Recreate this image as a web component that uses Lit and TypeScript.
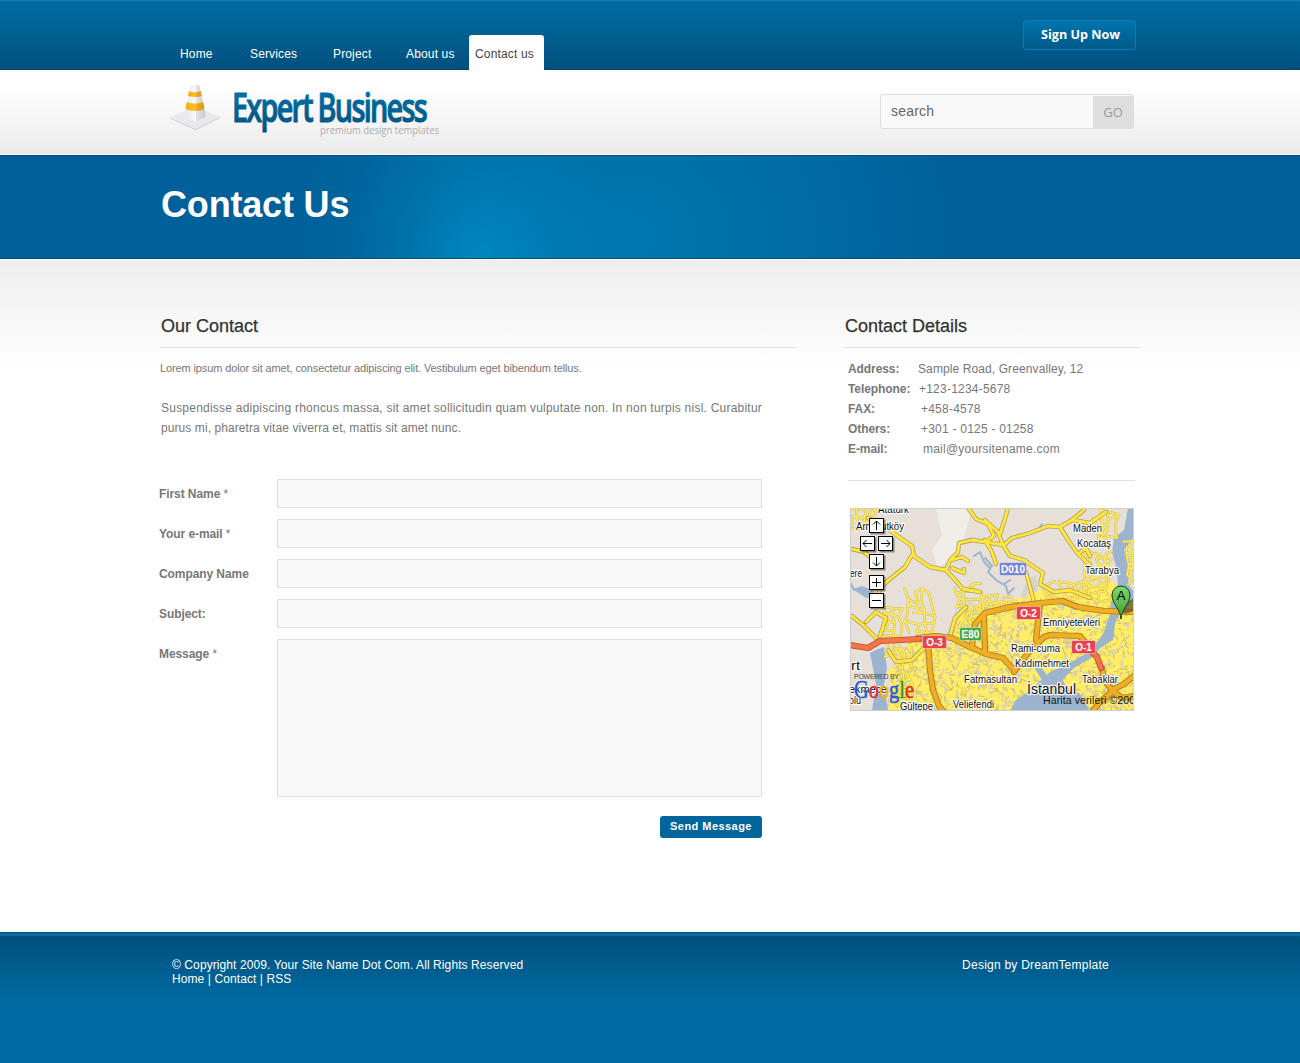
import { LitElement, html, svg, css } from "lit";
import { customElement } from "lit/decorators.js";

const NAV = [
  { label: "Home", width: 70 },
  { label: "Services", width: 83 },
  { label: "Project", width: 73 },
  { label: "About us", width: 63 },
];

const DETAILS = [
  { label: "Address:", value: "Sample Road, Greenvalley, 12", offset: 70 },
  { label: "Telephone:", value: "+123-1234-5678", offset: 71 },
  { label: "FAX:", value: "+458-4578", offset: 73 },
  { label: "Others:", value: "+301 - 0125 - 01258", offset: 73 },
  { label: "E-mail:", value: "mail@yoursitename.com", offset: 75 },
];

const FIELDS = [
  { label: "First Name", required: true },
  { label: "Your e-mail", required: true },
  { label: "Company Name", required: false },
  { label: "Subject:", required: false },
];

/* Small deterministic generator, so that the street texture is stable. */
function random(seed: number) {
  let s = seed;
  return () => {
    s = (s * 16807) % 2147483647;
    return s / 2147483647;
  };
}

/* A crooked street grid inside a rectangle. */
function streets(x: number, y: number, w: number, h: number, step: number, seed: number) {
  const r = random(seed);
  const cols = Math.round(w / step);
  const rows = Math.round(h / step);
  const pts: number[][][] = [];
  for (let j = 0; j <= rows; j++) {
    pts.push([]);
    for (let i = 0; i <= cols; i++) {
      pts[j].push([
        x + i * step + (r() - 0.5) * step * 0.9,
        y + j * step + (r() - 0.5) * step * 0.9,
      ]);
    }
  }
  let d = "";
  for (let j = 0; j <= rows; j++) {
    for (let i = 0; i <= cols; i++) {
      const [a, b] = pts[j][i];
      if (i < cols && r() > 0.25) {
        d += `M${a.toFixed(1)} ${b.toFixed(1)}L${pts[j][i + 1][0].toFixed(1)} ${pts[j][i + 1][1].toFixed(1)}`;
      }
      if (j < rows && r() > 0.2) {
        d += `M${a.toFixed(1)} ${b.toFixed(1)}L${pts[j + 1][i][0].toFixed(1)} ${pts[j + 1][i][1].toFixed(1)}`;
      }
    }
  }
  return d;
}

/* Short block outlines scattered over the dense urban area. */
function blocks(count: number, seed: number) {
  const r = random(seed);
  let d = "";
  for (let i = 0; i < count; i++) {
    const x = 880 + r() * 254;
    const y = 596 + r() * 114;
    const a = r() * Math.PI;
    const l = 1.5 + r() * 3;
    d += `M${x.toFixed(1)} ${y.toFixed(1)}l${(Math.cos(a) * l).toFixed(1)} ${(Math.sin(a) * l).toFixed(1)}`;
  }
  return d;
}

const STREETS = [
  streets(852, 511, 24, 18, 6, 11),
  streets(908, 592, 22, 46, 8, 23),
  streets(958, 586, 24, 44, 7, 37),
  streets(1086, 552, 26, 50, 6, 41),
  streets(1096, 511, 22, 26, 7, 53),
  streets(1126, 540, 8, 44, 6, 67),
  streets(886, 608, 12, 46, 7, 71),
  streets(1046, 584, 40, 16, 7, 83),
  streets(985, 596, 28, 18, 6, 97),
  streets(898, 650, 12, 56, 6, 101),
].join("");

const MAIN_STREETS = [
  "M868 518L880 523L902 539L912 546L914 556L930 567L946 570L956 581L963 589L980 592",
  "M912 555L905 567L890 579L880 588L876 606",
  "M946 570L950 560L958 552L959 543L972 540L985 542L994 536L988 524L976 519L968 508",
  "M952 560L962 557L968 561M952 568L964 573L964 569",
  "M985 542L1004 545L1012 538L1030 533L1048 526L1060 527L1068 540L1078 554L1090 565",
  "M985 520L998 532L1003 545L1010 556L1024 560L1043 573L1040 584L1054 592L1070 590L1090 598",
  "M1000 534L1004 522L1008 508M985 540L992 552L996 564M1026 572L1034 602",
  "M1060 527L1072 520L1084 510M1072 520L1090 523L1106 512M1078 554L1086 548L1090 556",
  "M852 616L864 626L876 638M866 622L876 612L886 618L880 636M888 650L896 662L912 660L926 646",
  "M966 607L955 618L950 636M852 549L864 552L874 560",
].join("");

const HIGHWAYS = [
  "M918 638L936 636L952 638L968 646L986 654L1003 658L1014 670",
  "M928 644L930 670L933 690L939 706L944 712",
  "M972 646L975 624L985 613L1010 607L1040 603L1062 601L1078 607L1104 611L1134 612",
  "M985 652L984 618M1040 604L1036 640",
  "M1014 672L1028 653L1044 637L1050 635L1080 636L1088 646",
  "M1102 668L1104 680L1112 690L1122 698L1134 696M1112 690L1124 684L1134 676M1112 692L1100 702L1092 712",
].join("");

const RED_ROADS = "M850 645L868 648L880 641L920 639M1090 650L1097 657L1101 668";

const MAP_LABELS = [
  { x: 878, y: 513, w: 31, t: "Atatürk", s: 10 },
  { x: 856, y: 530, w: 48, t: "Arnavutköy", s: 10 },
  { x: 850, y: 577, w: 12, t: "ere", s: 10 },
  { x: 1073, y: 532, w: 29, t: "Maden", s: 10 },
  { x: 1077, y: 547, w: 34, t: "Kocataş", s: 10 },
  { x: 1085, y: 574, w: 34, t: "Tarabya", s: 10 },
  { x: 1043, y: 626, w: 57, t: "Emniyetevleri", s: 10 },
  { x: 1011, y: 652, w: 49, t: "Rami-cuma", s: 10 },
  { x: 1015, y: 667, w: 54, t: "Kadımehmet", s: 10 },
  { x: 964, y: 683, w: 53, t: "Fatmasultan", s: 10 },
  { x: 1082, y: 683, w: 36, t: "Tabaklar", s: 10 },
  { x: 900, y: 710, w: 33, t: "Gültepe", s: 10 },
  { x: 953, y: 708, w: 41, t: "Veliefendi", s: 10 },
  { x: 1027, y: 694, w: 49, t: "İstanbul", s: 14 },
  { x: 851, y: 670, w: 9, t: "rt", s: 12 },
  { x: 849, y: 693, w: 38, t: "ekmece", s: 10 },
  { x: 849, y: 704, w: 12, t: "olu", s: 10 },
];

const SHIELDS = [
  { x: 999, y: 562, w: 28, t: "D010", c: "#7784d0" },
  { x: 1016, y: 606, w: 25, t: "O-2", c: "#e64550" },
  { x: 922, y: 635, w: 25, t: "O-3", c: "#e64550" },
  { x: 1071, y: 640, w: 25, t: "O-1", c: "#e64550" },
  { x: 959, y: 627, w: 23, t: "E80", c: "#52a84c" },
];

const CONTROLS = [
  { x: 869, y: 518, d: "M7.5 12V3M4 6.5L7.5 3L11 6.5" },
  { x: 860, y: 536, d: "M12 7.5H3M6.5 4L3 7.5L6.5 11" },
  { x: 878, y: 536, d: "M3 7.5H12M8.5 4L12 7.5L8.5 11" },
  { x: 869, y: 554, d: "M7.5 3V12M4 8.5L7.5 12L11 8.5" },
  { x: 869, y: 575, d: "M3 7.5H12M7.5 3V12" },
  { x: 869, y: 593, d: "M3 7.5H12" },
];

const GOOGLE = [
  ["G", "#2a5bd0"],
  ["o", "#d8302a"],
  ["o", "#f0b400"],
  ["g", "#2a5bd0"],
  ["l", "#2f9a3c"],
  ["e", "#d8302a"],
];

@customElement("city-map")
export class CityMap extends LitElement {
  static styles = css`
    :host {
      display: block;
      width: 284px;
      height: 203px;
    }
    svg {
      display: block;
    }
    text {
      font-family: "Liberation Sans", Arial, sans-serif;
    }
    .place {
      fill: #111;
      stroke: #fff;
      stroke-opacity: 0.85;
      stroke-width: 2.4px;
      stroke-linejoin: round;
      paint-order: stroke;
    }
    .shield {
      fill: #fff;
      font-weight: 700;
      font-size: 10px;
      text-anchor: middle;
    }
    .google {
      font-family: "Liberation Serif", "Times New Roman", serif;
      font-size: 25px;
      stroke-width: 0.5px;
    }
    .line {
      fill: none;
      stroke-linejoin: round;
      stroke-linecap: round;
    }
  `;

  render() {
    return html`
      <svg width="284" height="203" viewBox="850 508 284 203">
        <defs>
          <clipPath id="urban">
            <path
              d="M900 656L910 640L926 636L950 645L956 622L968 606L990 604L1020 598L1040 590L1080 590L1112 582L1134 592V712H884L892 690L888 672Z"
            />
          </clipPath>
          <linearGradient id="pin" x1="0" y1="0" x2="0" y2="1">
            <stop offset="0" stop-color="#7fd868" />
            <stop offset="1" stop-color="#3c9d34" />
          </linearGradient>
        </defs>
        <rect x="850" y="508" width="284" height="203" fill="#e7e0d8" />
        <path d="M936 508L972 508L960 552L938 568L932 550L942 536Z" fill="#f1eeea" />
        <path d="M1028 578L1036 576L1038 602L1018 604Z" fill="#d5d1cb" />
        <path d="M962 592L980 610L962 640L946 636Z" fill="#d9d6d0" />
        <g clip-path="url(#urban)">
          <rect x="850" y="580" width="284" height="131" fill="#ffed66" />
          <path class="line" d=${blocks(1500, 5)} stroke="#d2c47c" stroke-width="1.3" />
          <path class="line" d=${blocks(380, 19)} stroke="#d9cfbe" stroke-width="2.2" />
          <path class="line" d=${blocks(500, 29)} stroke="#ffee5c" stroke-width="1.6" />
        </g>
        <g fill="#9db4cf">
          <path
            d="M1128 508H1134V537L1124 550L1130 562L1128 584L1134 592V600L1120 612L1115 624L1113 640L1100 648L1094 656L1074 668L1062 680L1068 688L1080 694L1090 711H1010L1016 700L1028 692L1050 672L1068 664L1092 650L1104 632L1110 614L1112 596L1118 584L1116 566L1112 552L1114 538L1124 530Z"
          />
          <path d="M870 653L876 650L884 647L887 668L884 684L888 711H872L876 684Z" />
          <path d="M853 589L862 586L872 590L878 596L866 598Z" />
          <path d="M1032 664L1038 664L1048 676L1042 680Z" />
        </g>
        <path
          class="line"
          d="M985 558L992 566L988 572L996 580L1006 586L1008 594L1014 588M974 556L980 552L984 562L990 568M850 582L854 590M1038 530L1042 524M1004 584L1010 580"
          stroke="#9db4cf"
          stroke-width="2"
        />
        <path class="line" d=${STREETS} stroke="#c8b568" stroke-width="2.6" />
        <path class="line" d=${STREETS} stroke="#ffea55" stroke-width="1.7" />
        <path class="line" d=${MAIN_STREETS} stroke="#b49c5c" stroke-width="4.4" />
        <path class="line" d=${MAIN_STREETS} stroke="#ffe83c" stroke-width="2.8" />
        <path class="line" d=${HIGHWAYS} stroke="#ab7a20" stroke-width="6.2" />
        <path class="line" d=${HIGHWAYS} stroke="#f0ae22" stroke-width="4.4" />
        <path class="line" d=${RED_ROADS} stroke="#b0523a" stroke-width="6.2" />
        <path class="line" d=${RED_ROADS} stroke="#fa7344" stroke-width="4.4" />
        <path d="M1121 606L1134 598V611L1124 614Z" fill="#5d5128" opacity=".75" />
        ${MAP_LABELS.map(
          (l) => svg`<text class="place" x=${l.x} y=${l.y} font-size=${l.s}
            textLength=${l.w} lengthAdjust="spacingAndGlyphs">${l.t}</text>`
        )}
        ${SHIELDS.map(
          (s) => svg`
            <rect x=${s.x + 0.5} y=${s.y + 0.5} width=${s.w - 1} height="13" rx="1.5"
              fill=${s.c} stroke="#fff" stroke-opacity=".4" />
            <text class="shield" x=${s.x + s.w / 2} y=${s.y + 10.5}>${s.t}</text>`
        )}
        ${CONTROLS.map(
          (c) => svg`<g transform="translate(${c.x} ${c.y})">
            <rect x="1.5" y="1.5" width="15" height="15" fill="#000" opacity=".4" />
            <rect x=".5" y=".5" width="14" height="14" fill="#fff" stroke="#000" />
            <path d=${c.d} fill="none" stroke="#000" />
          </g>`
        )}
        <path
          d="M1121 619C1120.500 609 1112 604 1112 595A9 9 0 0 1 1130 595C1130 604 1121.500 609 1121 619Z"
          fill="url(#pin)"
          stroke="#173d14"
        />
        <text x="1121" y="600" font-size="13" text-anchor="middle" fill="#000">A</text>
        <text x="854" y="679" font-size="7" textLength="45" fill="#444">POWERED BY</text>
        <text class="google" x="854" y="698" textLength="60" lengthAdjust="spacingAndGlyphs">${GOOGLE.map(
          ([ch, color]) => svg`<tspan fill=${color} stroke=${color}>${ch}</tspan>`
        )}</text>
        <text x="1043" y="704" font-size="10.500" textLength="98" fill="#111">Harita verileri ©2009</text>
        <rect x="850.5" y="508.5" width="283" height="202" fill="none" stroke="#cfcfcf" />
      </svg>
    `;
  }
}

@customElement("brand-logo")
export class BrandLogo extends LitElement {
  static styles = css`
    :host {
      display: block;
      width: 275px;
      height: 60px;
    }
    svg {
      display: block;
    }
    .name {
      font-family: "Open Sans", "Noto Sans", sans-serif;
      font-weight: 600;
      font-size: 40px;
      letter-spacing: -2.4px;
      stroke-width: 1px;
    }
    .tag {
      font-family: "Open Sans", "Noto Sans", sans-serif;
      font-size: 11.5px;
    }
  `;

  render() {
    return html`
      <svg width="275" height="60" viewBox="168 80 275 60">
        <defs>
          <linearGradient id="blue" x1="0" y1="0" x2="0" y2="1">
            <stop offset="0" stop-color="#0078ae" />
            <stop offset="1" stop-color="#00517f" />
          </linearGradient>
          <linearGradient id="body" x1="0" y1="0" x2="1" y2="0">
            <stop offset="0" stop-color="#e6e6e9" />
            <stop offset=".5" stop-color="#fafafa" />
            <stop offset=".55" stop-color="#e2e2e8" />
            <stop offset="1" stop-color="#c6c6d0" />
          </linearGradient>
          <linearGradient id="band" x1="0" y1="0" x2="1" y2="0">
            <stop offset="0" stop-color="#f0a808" />
            <stop offset=".5" stop-color="#fdc433" />
            <stop offset=".6" stop-color="#efaa18" />
            <stop offset="1" stop-color="#dc9a14" />
          </linearGradient>
        </defs>
        <path d="M170 117.500L195 106L220 117L195.500 129Z" fill="#e8e8ee" />
        <path d="M170 117.500L195.500 129L220 117V118L195.500 130.300L170 118.500Z" fill="#cfcfd6" />
        <path d="M190.500 85.500Q195 83 199.500 85.500L206 117L195.500 121.500L185 117Z" fill="url(#body)" />
        <path d="M189 91Q195 93.500 200.800 91L201.800 96Q195 98 188 96Z" fill="url(#band)" />
        <path d="M186.800 102Q195 105 203 102L204.500 109Q195 113 185.500 109Z" fill="url(#band)" />
        <text
          class="name"
          x="232"
          y="121.500"
          textLength="194"
          lengthAdjust="spacingAndGlyphs"
          fill="url(#blue)"
          stroke="url(#blue)"
        >Expert Business</text>
        <text
          class="tag"
          x="320"
          y="134"
          textLength="119"
          lengthAdjust="spacingAndGlyphs"
          fill="#adadad"
        >premium design templates</text>
      </svg>
    `;
  }
}

@customElement("app-root")
export class AppRoot extends LitElement {
  static styles = css`
    :host {
      display: block;
      width: 1300px;
      height: 1063px;
      background: #fff;
      color: #777;
      font: 12px/20px "Liberation Sans", Arial, sans-serif;
      overflow: hidden;
    }
    * {
      box-sizing: border-box;
    }
    h1,
    h2,
    p {
      margin: 0;
    }
    .top {
      height: 70px;
      padding: 0 164px 0 180px;
      display: flex;
      align-items: flex-end;
      background: linear-gradient(#006ba3, #006699 30%, #00507e);
      border-top: 1px solid #1a7fae;
      border-bottom: 1px solid #00456c;
    }
    .nav {
      display: flex;
      align-items: flex-end;
      margin-bottom: -1px;
    }
    .link {
      height: 35px;
      line-height: 39px;
      color: #fff;
      letter-spacing: 0.15px;
      white-space: nowrap;
    }
    .active {
      width: 75px;
      padding-left: 6px;
      background: #fff;
      border-radius: 3px 3px 0 0;
      color: #444;
    }
    .signup {
      width: 113px;
      height: 30px;
      margin: 0 0 19px auto;
      padding: 0 0 1px 2px;
      border: 1px solid #0a7db6;
      border-radius: 3px;
      background: linear-gradient(#0075ad, #005a8a);
      color: #fff;
      font: 700 12.6px/26px "Open Sans", sans-serif;
    }
    .brand {
      height: 85px;
      padding: 10px 166px 0 168px;
      display: flex;
      justify-content: space-between;
      background: linear-gradient(#fff 20%, #ebebeb);
      border-bottom: 1px solid #fff;
    }
    .search {
      display: flex;
      width: 254px;
      height: 35px;
      margin-top: 14px;
      border: 1px solid #dedede;
      border-radius: 3px;
      background: #f9f9f9;
      overflow: hidden;
    }
    .query {
      flex: 1;
      padding-left: 10px;
      font-size: 14px;
      line-height: 32px;
      color: #666;
      letter-spacing: 0.2px;
    }
    .go {
      width: 40px;
      margin-top: 1px;
      background: #dedede;
      color: #999;
      font: 500 13px/32px "Open Sans", sans-serif;
      text-align: center;
    }
    .hero {
      height: 104px;
      padding: 26px 0 0 161px;
      border-top: 1px solid #004e7c;
      border-bottom: 1px solid #004e7c;
      background: radial-gradient(
          ellipse 140px 170px at 482px 100%,
          rgba(0, 145, 200, 0.7),
          rgba(0, 140, 196, 0.25) 55%,
          transparent
        ),
        radial-gradient(ellipse 340px 300px at 625px 80%, rgba(0, 128, 184, 0.72), rgba(0, 124, 180, 0.4) 55%, transparent),
        #006099;
    }
    .title {
      color: #fff;
      font-size: 36px;
      line-height: 46px;
      font-weight: 700;
      letter-spacing: -0.18px;
    }
    .main {
      display: flex;
      height: 673px;
      padding-top: 56px;
      padding-left: 160px;
      gap: 48px;
      background: linear-gradient(#eee, #fff 112px);
      border-top: 1px solid #fff;
    }
    .left {
      width: 636px;
    }
    .right {
      width: 296px;
    }
    .heading {
      height: 32px;
      padding-left: 1px;
      border-bottom: 1px solid #e0e0e0;
      color: #333;
      font-size: 18px;
      line-height: 20px;
      font-weight: 400;
      white-space: nowrap;
      -webkit-text-stroke: 0.25px #333;
    }
    .lead {
      margin-top: 10px;
      font-size: 11px;
      letter-spacing: -0.12px;
    }
    .body {
      margin: 20px 0 0 1px;
      letter-spacing: 0.08px;
      white-space: nowrap;
    }
    .wide {
      letter-spacing: 0.227px;
    }
    .form {
      width: 602px;
      margin-top: 41px;
      display: flex;
      flex-direction: column;
      gap: 11px;
    }
    .row {
      display: flex;
    }
    .label {
      width: 118px;
      height: 29px;
      margin-left: -1px;
      line-height: 31px;
      letter-spacing: -0.08px;
    }
    .field {
      width: 485px;
      height: 29px;
      border: 1px solid #e0e0e0;
      background: #f8f8f8;
    }
    .tall {
      height: 158px;
    }
    .send {
      align-self: flex-end;
      width: 102px;
      height: 22px;
      margin-top: 8px;
      padding: 0 0 2px;
      border: 0;
      border-radius: 3px;
      background: #00669c;
      color: #fff;
      font: 700 11px/20px "Liberation Sans", Arial, sans-serif;
      letter-spacing: 0.45px;
    }
    .details {
      width: 287px;
      height: 133px;
      margin: 0 0 27px 4px;
      padding-top: 11px;
      border-bottom: 1px solid #e0e0e0;
    }
    .detail {
      display: flex;
      white-space: nowrap;
    }
    .detail b {
      letter-spacing: -0.08px;
    }
    .value {
      letter-spacing: 0.22px;
    }
    .detail:first-child .value {
      letter-spacing: 0.1px;
    }
    .map {
      margin-left: 6px;
    }
    .footer {
      height: 131px;
      display: flex;
      justify-content: space-between;
      padding: 22px 191px 0 172px;
      border-top: 1px solid #00507a;
      background: linear-gradient(#006ba3 3px, #00507b 3px, #006ba3 70px);
      color: #fff;
      line-height: 14px;
      letter-spacing: 0.09px;
    }
    .footer p {
      padding-top: 3px;
    }
    .credit {
      letter-spacing: 0.24px;
    }
  `;

  render() {
    return html`
      <header class="top">
        <nav class="nav">
          ${NAV.map((n) => html`<a class="link" style="width:${n.width}px">${n.label}</a>`)}
          <a class="link active">Contact us</a>
        </nav>
        <button class="signup">Sign Up Now</button>
      </header>
      <div class="brand">
        <brand-logo></brand-logo>
        <div class="search">
          <span class="query">search</span>
          <span class="go">GO</span>
        </div>
      </div>
      <section class="hero"><h1 class="title">Contact Us</h1></section>
      <main class="main">
        <section class="left">
          <h2 class="heading">Our Contact</h2>
          <p class="lead">
            Lorem ipsum dolor sit amet, consectetur adipiscing elit. Vestibulum eget bibendum tellus.
          </p>
          <p class="body">
            <span class="wide"
              >Suspendisse adipiscing rhoncus massa, sit amet sollicitudin quam vulputate non. In non
              turpis nisl. Curabitur</span
            ><br />purus mi, pharetra vitae viverra et, mattis sit amet nunc.
          </p>
          <div class="form">
            ${FIELDS.map(
              (f) => html`<div class="row">
                <span class="label"><b>${f.label}</b>${f.required ? " *" : ""}</span>
                <div class="field"></div>
              </div>`
            )}
            <div class="row">
              <span class="label"><b>Message</b> *</span>
              <div class="field tall"></div>
            </div>
            <button class="send">Send Message</button>
          </div>
        </section>
        <aside class="right">
          <h2 class="heading">Contact Details</h2>
          <div class="details">
            ${DETAILS.map(
              (d) => html`<div class="detail">
                <b style="width:${d.offset}px">${d.label}</b><span class="value">${d.value}</span>
              </div>`
            )}
          </div>
          <city-map class="map"></city-map>
        </aside>
      </main>
      <footer class="footer">
        <p>
          © Copyright 2009. Your Site Name Dot Com. All Rights Reserved<br />Home | Contact | RSS
        </p>
        <p class="credit">Design by DreamTemplate</p>
      </footer>
    `;
  }
}
